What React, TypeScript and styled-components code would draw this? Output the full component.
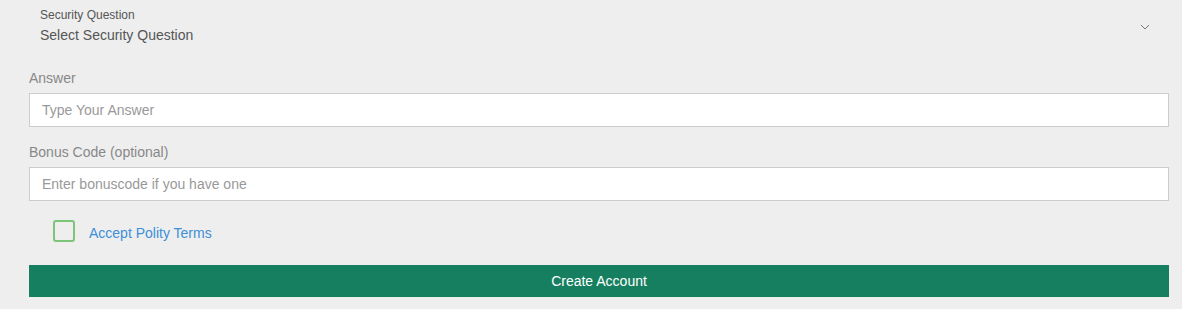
import styled, { createGlobalStyle } from 'styled-components';

const Global = createGlobalStyle`
  html, body {
    margin: 0;
    padding: 0;
    background: #eeeeee;
    font-family: 'Liberation Sans', Arial, sans-serif;
  }
`;

const Form = styled.form`
  width: 1140px;
  padding: 7px 0 12px 29px;
  display: flex;
  flex-direction: column;
`;

const Select = styled.div`
  position: relative;
  padding-left: 11px;
  display: flex;
  flex-direction: column;
  cursor: pointer;
`;

const SelectLabel = styled.span`
  font-size: 12px;
  line-height: 16px;
  color: #555;
`;

const SelectValue = styled.span`
  margin-top: 2px;
  font-size: 14px;
  line-height: 20px;
  color: #555;
`;

const Chevron = styled.svg`
  position: absolute;
  right: 19px;
  top: 17px;
`;

const Label = styled.label<{ $top: number }>`
  margin-top: ${p => p.$top}px;
  font-size: 14px;
  line-height: 20px;
  color: #888;
`;

const Input = styled.input`
  box-sizing: border-box;
  margin-top: 5px;
  width: 100%;
  height: 34px;
  padding: 0 12px;
  border: 1px solid #cccccc;
  background: #fff;
  font-family: inherit;
  font-size: 14px;
  color: #555;
  outline: none;

  &::placeholder {
    color: #999;
  }
`;

const CheckRow = styled.label`
  margin-top: 19px;
  height: 22px;
  padding-left: 24px;
  display: flex;
  align-items: center;
  gap: 14px;
  cursor: pointer;
`;

const Box = styled.span`
  box-sizing: border-box;
  width: 22px;
  height: 22px;
  border: 2px solid #7cc477;
  border-radius: 3px;
  background: #eeeeee;
`;

const Terms = styled.a`
  padding-top: 3px;
  font-size: 14px;
  line-height: 20px;
  color: #3c8fd8;
  text-decoration: none;
`;

const Button = styled.button`
  margin-top: 23px;
  height: 32px;
  width: 100%;
  border: none;
  background: #167f5f;
  color: #fff;
  font-family: inherit;
  font-size: 14px;
  cursor: pointer;
`;

export default function App() {
  return (
    <>
      <Global />
      <Form onSubmit={e => e.preventDefault()}>
        <Select>
          <SelectLabel>Security Question</SelectLabel>
          <SelectValue>Select Security Question</SelectValue>
          <Chevron width="10" height="6" viewBox="0 0 10 6">
            <path d="M1 1 L5 5 L9 1" fill="none" stroke="#777" strokeWidth="1" />
          </Chevron>
        </Select>
        <Label $top={23}>Answer</Label>
        <Input placeholder="Type Your Answer" />
        <Label $top={15}>Bonus Code (optional)</Label>
        <Input placeholder="Enter bonuscode if you have one" />
        <CheckRow>
          <Box />
          <Terms href="#">Accept Polity Terms</Terms>
        </CheckRow>
        <Button type="submit">Create Account</Button>
      </Form>
    </>
  );
}
